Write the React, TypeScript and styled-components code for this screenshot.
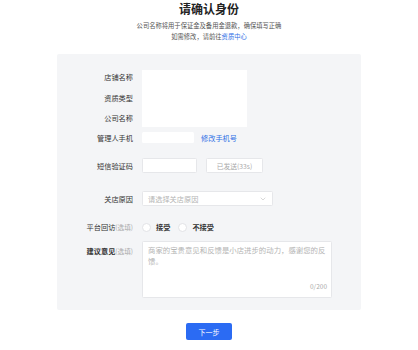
import styled, { createGlobalStyle } from 'styled-components';
import { ChevronDown } from 'lucide-react';

const GlobalStyle = createGlobalStyle`
    html, body {
        margin: 0;
        padding: 0;
        background: #fff;
    }
    body {
        font-family: "Noto Sans CJK SC", "Noto Sans", sans-serif;
        color: #333;
    }
`

const Page = styled.div`
    display: flex;
    flex-direction: column;
    align-items: center;
    padding-top: 2px;
`
const Title = styled.h1`
    margin: 0;
    font-size: 12px;
    line-height: 14px;
    font-weight: 700;
    color: #222;
`
const Subtitle = styled.p`
    margin: 0;
    font-size: 6.3px;
    line-height: 11px;
    color: #555;
    text-align: center;
`
const Intro = styled.div`
    margin-top: 3.5px;
`
const Link = styled.a`
    color: #2f6fe6;
    text-decoration: none;
    cursor: pointer;
`
const Panel = styled.div`
    margin-top: 12.5px;
    width: 304px;
    box-sizing: border-box;
    background: #f4f5f7;
    border-radius: 2px;
    padding: 13px 28px 12px 0;
    display: flex;
    flex-direction: column;
`
const Row = styled.div<{ $top?: number; $height?: number; $alignTop?: boolean }>`
    display: grid;
    grid-template-columns: 76px 1fr;
    column-gap: 9px;
    align-items: ${p => (p.$alignTop ? 'start' : 'center')};
    margin-top: ${p => p.$top ?? 0}px;
    height: ${p => (p.$height ? `${p.$height}px` : 'auto')};
`
const InfoBlock = styled.div`
    display: grid;
    grid-template-columns: 76px 105px;
    grid-template-rows: repeat(3, 20.5px);
    column-gap: 9px;
    align-items: center;
`
const InfoValue = styled.div`
    grid-column: 2;
    grid-row: 1 / 4;
    align-self: stretch;
    margin: 3px 0 1.5px;
    background: #fff;
`
const Label = styled.div<{ $bold?: boolean; $padTop?: number }>`
    text-align: right;
    font-size: 7.2px;
    line-height: 10px;
    color: #333;
    font-weight: ${p => (p.$bold ? 600 : 400)};
    padding-top: ${p => p.$padTop ?? 0}px;
    white-space: nowrap;
`
const Optional = styled.span`
    color: #aaa;
    font-weight: 400;
    font-size: 6.6px;
`
const Inline = styled.div`
    display: flex;
    align-items: center;
    gap: 7px;
`
const Blank = styled.div<{ $w: number; $h: number }>`
    width: ${p => p.$w}px;
    height: ${p => p.$h}px;
    background: #fff;
    box-sizing: border-box;
    border: ${p => (p.$h > 12 ? '0.5px solid #e6e7ea' : 'none')};
    border-radius: 1.5px;
`
const SmallLink = styled(Link)`
    font-size: 7.2px;
`
const GhostButton = styled.div`
    width: 57px;
    height: 15px;
    margin-left: 2px;
    box-sizing: border-box;
    background: #fff;
    border: 0.5px solid #e6e7ea;
    border-radius: 1.5px;
    display: flex;
    align-items: center;
    justify-content: center;
    font-size: 6.8px;
    color: #aaa;
`
const Select = styled.div`
    width: 131px;
    height: 15px;
    box-sizing: border-box;
    background: #fff;
    border: 0.5px solid #e6e7ea;
    border-radius: 1.5px;
    display: flex;
    align-items: center;
    justify-content: space-between;
    padding: 0 5px 0 5px;
    font-size: 7.2px;
    color: #b4b4b4;
`
const RadioGroup = styled.div`
    display: flex;
    align-items: center;
`
const RadioItem = styled.label`
    display: flex;
    align-items: center;
    gap: 5px;
    margin-right: 8px;
    font-size: 7.2px;
    font-weight: 600;
    color: #333;
`
const Circle = styled.span`
    width: 9px;
    height: 9px;
    box-sizing: border-box;
    border-radius: 50%;
    background: #fff;
    border: 0.5px solid #e2e3e6;
`
const TextArea = styled.div`
    position: relative;
    width: 190px;
    height: 57px;
    box-sizing: border-box;
    background: #fff;
    border: 0.5px solid #e6e7ea;
    border-radius: 1.5px;
    padding: 1.5px 5px;
    font-size: 7.4px;
    line-height: 11.5px;
    color: #b4b4b4;
`
const Counter = styled.span`
    position: absolute;
    right: 4px;
    bottom: 5px;
    font-size: 6.5px;
    color: #aaa;
`
const NextButton = styled.button`
    margin-top: 13px;
    width: 46px;
    height: 17px;
    border: none;
    border-radius: 2px;
    background: #2b6bf3;
    color: #fff;
    font-family: inherit;
    font-size: 7px;
    padding: 0;
    cursor: pointer;
`

function App() {
    return (
        <>
            <GlobalStyle />
            <Page>
                <Title>请确认身份</Title>
                <Intro>
                    <Subtitle>公司名称将用于保证金及备用金退款，确保填写正确</Subtitle>
                    <Subtitle>如需修改，请前往<Link>资质中心</Link></Subtitle>
                </Intro>
                <Panel>
                    <InfoBlock>
                        <Label>店铺名称</Label>
                        <InfoValue />
                        <Label>资质类型</Label>
                        <Label>公司名称</Label>
                    </InfoBlock>
                    <Row $top={3.5} $height={11}>
                        <Label>管理人手机</Label>
                        <Inline>
                            <Blank $w={52} $h={10.5} />
                            <SmallLink>修改手机号</SmallLink>
                        </Inline>
                    </Row>
                    <Row $top={15} $height={15}>
                        <Label>短信验证码</Label>
                        <Inline>
                            <Blank $w={55} $h={15} />
                            <GhostButton>已发送(33s)</GhostButton>
                        </Inline>
                    </Row>
                    <Row $top={18} $height={15}>
                        <Label>关店原因</Label>
                        <Select>
                            请选择关店原因
                            <ChevronDown size={8} color="#b0b0b0" strokeWidth={1.5} />
                        </Select>
                    </Row>
                    <Row $top={15} $height={12}>
                        <Label>平台回访<Optional>(选填)</Optional></Label>
                        <RadioGroup>
                            <RadioItem><Circle />接受</RadioItem>
                            <RadioItem><Circle />不接受</RadioItem>
                        </RadioGroup>
                    </Row>
                    <Row $top={8} $alignTop>
                        <Label $bold $padTop={5}>建议意见<Optional>(选填)</Optional></Label>
                        <TextArea>
                            商家的宝贵意见和反馈是小店进步的动力，感谢您的反馈。
                            <Counter>0/200</Counter>
                        </TextArea>
                    </Row>
                </Panel>
                <NextButton>下一步</NextButton>
            </Page>
        </>
    );
}

export default App;
